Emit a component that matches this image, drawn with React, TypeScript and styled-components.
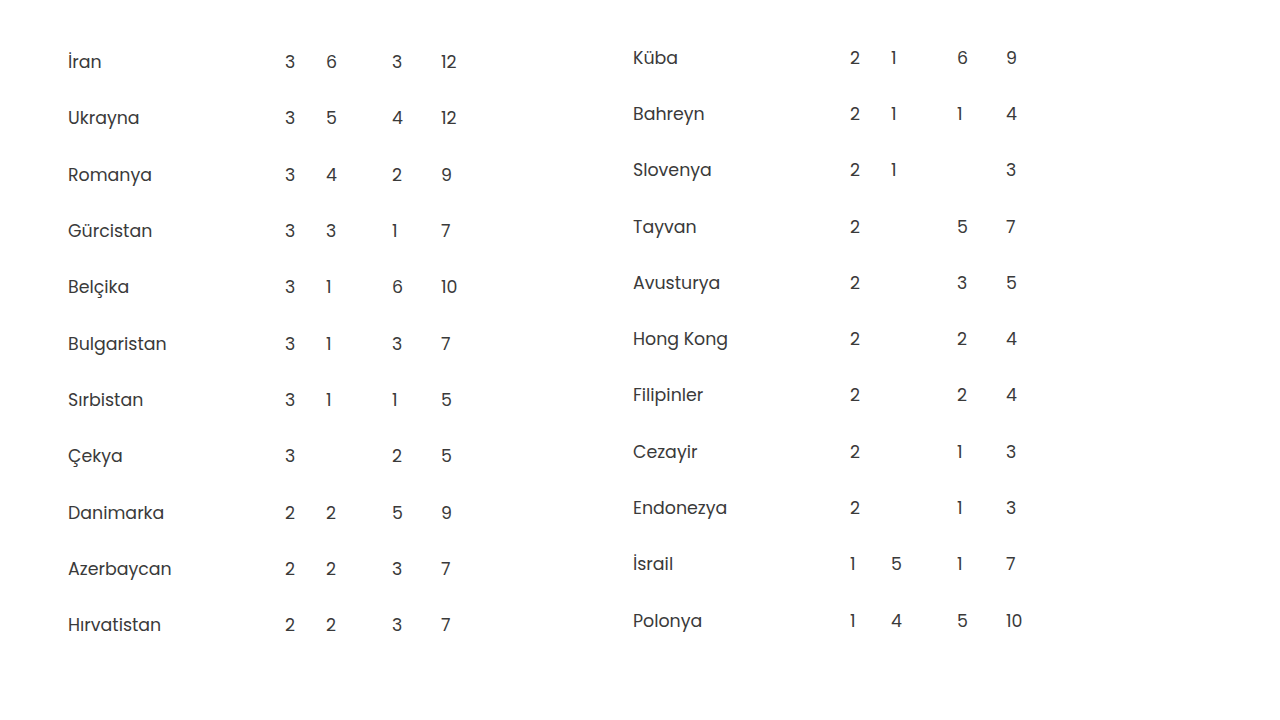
import React from "react";
import styled, { createGlobalStyle } from "styled-components";

const GlobalStyle = createGlobalStyle`
  html, body {
    margin: 0;
    padding: 0;
    background: #ffffff;
  }
  body {
    font-family: "Poppins", Inter, "Noto Sans", sans-serif;
  }
`;

type Row = [string, string, string, string, string];

const leftRows: Row[] = [
  ["İran", "3", "6", "3", "12"],
  ["Ukrayna", "3", "5", "4", "12"],
  ["Romanya", "3", "4", "2", "9"],
  ["Gürcistan", "3", "3", "1", "7"],
  ["Belçika", "3", "1", "6", "10"],
  ["Bulgaristan", "3", "1", "3", "7"],
  ["Sırbistan", "3", "1", "1", "5"],
  ["Çekya", "3", "", "2", "5"],
  ["Danimarka", "2", "2", "5", "9"],
  ["Azerbaycan", "2", "2", "3", "7"],
  ["Hırvatistan", "2", "2", "3", "7"],
];

const rightRows: Row[] = [
  ["Küba", "2", "1", "6", "9"],
  ["Bahreyn", "2", "1", "1", "4"],
  ["Slovenya", "2", "1", "", "3"],
  ["Tayvan", "2", "", "5", "7"],
  ["Avusturya", "2", "", "3", "5"],
  ["Hong Kong", "2", "", "2", "4"],
  ["Filipinler", "2", "", "2", "4"],
  ["Cezayir", "2", "", "1", "3"],
  ["Endonezya", "2", "", "1", "3"],
  ["İsrail", "1", "5", "1", "7"],
  ["Polonya", "1", "4", "5", "10"],
];

const Page = styled.div`
  display: grid;
  grid-template-columns: 565px 565px;
  padding-left: 68px;
  width: 1280px;
  height: 720px;
  box-sizing: border-box;
`;

const Table = styled.div<{ $top: number }>`
  display: flex;
  flex-direction: column;
  padding-top: ${(p) => p.$top}px;
`;

const TableRow = styled.div`
  display: grid;
  grid-template-columns: 217px 41px 66px 49px 1fr;
  align-items: center;
  height: 56.3px;
  color: #3a3a3a;
  font-size: 17.4px;
  font-weight: 400;
`;

const Cell = styled.span`
  white-space: nowrap;
`;

function MedalTable({ rows, top }: { rows: Row[]; top: number }) {
  return (
    <Table $top={top}>
      {rows.map((r) => (
        <TableRow key={r[0]}>
          {r.map((c, i) => (
            <Cell key={i}>{c}</Cell>
          ))}
        </TableRow>
      ))}
    </Table>
  );
}

export default function App() {
  return (
    <>
      <GlobalStyle />
      <Page>
        <MedalTable rows={leftRows} top={34} />
        <MedalTable rows={rightRows} top={29.5} />
      </Page>
    </>
  );
}
